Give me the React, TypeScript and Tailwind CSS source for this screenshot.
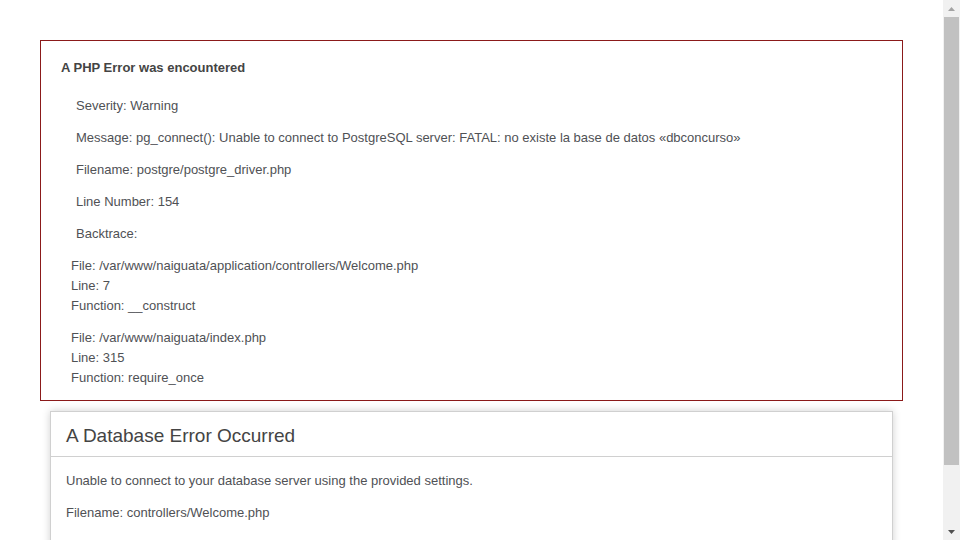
import React from 'react';

const PhpError = () => {
  return (
    <div className="mx-10 mt-10 border border-[#8b1a1a] pl-5 pt-[18px] pb-[12px] text-[13px] text-[#4f5155]">
      <h4 className="font-bold leading-[18px] text-[#444]">A PHP Error was encountered</h4>
      <div className="mt-5 ml-[15px] flex flex-col gap-[14px] leading-[18px]">
        <p>Severity: Warning</p>
        <p>Message: pg_connect(): Unable to connect to PostgreSQL server: FATAL: no existe la base de datos «dbconcurso»</p>
        <p>Filename: postgre/postgre_driver.php</p>
        <p>Line Number: 154</p>
        <p>Backtrace:</p>
      </div>
      <div className="mt-[13px] ml-[10px] flex flex-col gap-3 leading-5">
        <p>
          File: /var/www/naiguata/application/controllers/Welcome.php<br />
          Line: 7<br />
          Function: __construct
        </p>
        <p>
          File: /var/www/naiguata/index.php<br />
          Line: 315<br />
          Function: require_once
        </p>
      </div>
    </div>
  );
};

const DatabaseError = () => {
  return (
    <div className="ml-[50px] mt-[10px] w-[843px] border border-[#d0d0d0] bg-white shadow-[0_0_8px_#d0d0d0] text-[#4f5155]">
      <h1 className="border-b border-[#d0d0d0] px-[15px] pt-[12px] pb-[8px] text-[19px] leading-6 font-normal text-[#444]">
        A Database Error Occurred
      </h1>
      <div className="px-[15px] pt-[15px] flex flex-col gap-[14px] text-[13px] leading-[18px]">
        <p>Unable to connect to your database server using the provided settings.</p>
        <p>Filename: controllers/Welcome.php</p>
        <p>Line Number: 7</p>
      </div>
    </div>
  );
};

const Scrollbar = () => {
  return (
    <div className="w-[17px] h-full bg-[#f1f1f1] flex flex-col items-center">
      <div className="h-[17px] w-full flex items-center justify-center">
        <svg width="7" height="4" viewBox="0 0 7 4">
          <path d="M3.5 0 L7 4 L0 4 Z" fill="#a3a3a3" />
        </svg>
      </div>
      <div className="w-[15px] h-[448px] bg-[#c1c1c1]" />
      <div className="flex-1" />
      <div className="h-[17px] w-full flex items-center justify-center">
        <svg width="7" height="4" viewBox="0 0 7 4">
          <path d="M0 0 L7 0 L3.5 4 Z" fill="#505050" />
        </svg>
      </div>
    </div>
  );
};

export default function App() {
  return (
    <div
      className="flex h-[540px] w-[960px] overflow-hidden bg-white"
      style={{ fontFamily: '"Liberation Sans", Arial, sans-serif' }}
    >
      <div className="flex-1 overflow-hidden">
        <PhpError />
        <DatabaseError />
      </div>
      <Scrollbar />
    </div>
  );
}
